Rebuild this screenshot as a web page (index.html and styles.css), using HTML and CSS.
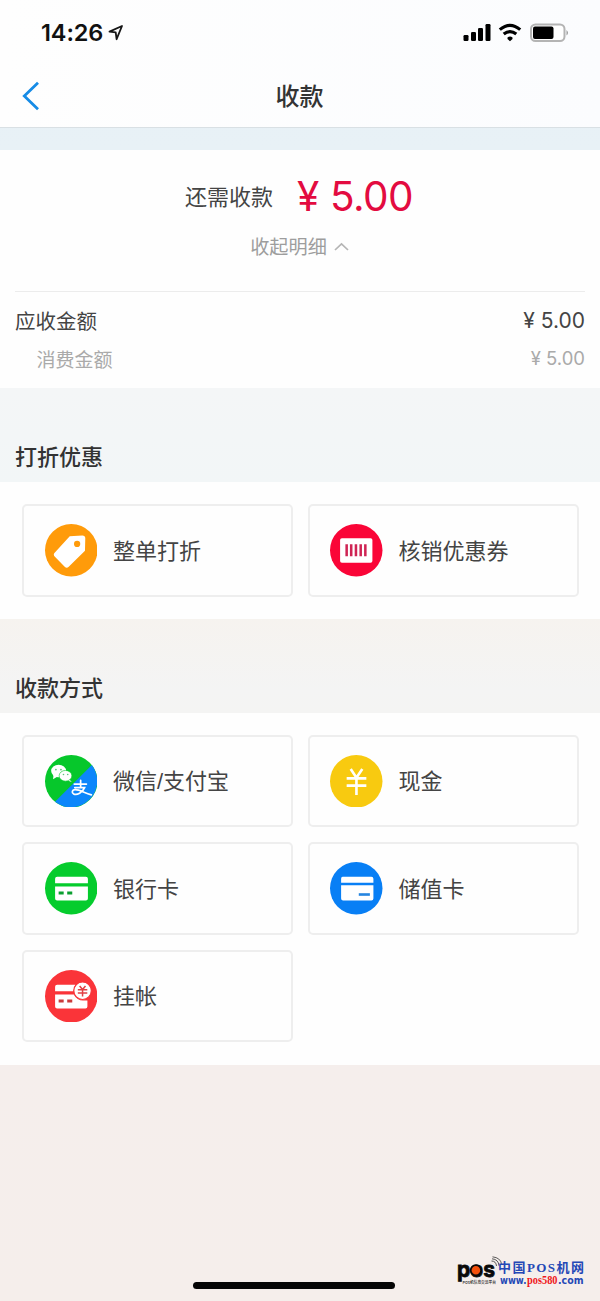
FILE: index.html
```html
<!DOCTYPE html>
<html lang="zh-CN">
<head>
<meta charset="utf-8">
<title>收款</title>
<link rel="stylesheet" href="styles.css">
</head>
<body>
<div class="screen">
  <header class="header">
    <div class="status">
      <div class="status-left">
        <span class="clock">14:26</span>
        <svg class="locate" width="16" height="18" viewBox="0 0 16 18"><path d="M1.5 7.6 14 2 8.6 15.2 7.7 8.3Z" fill="none" stroke="#151515" stroke-width="1.8" stroke-linejoin="round"/></svg>
      </div>
      <svg width="106" height="20" viewBox="0 0 106 20">
        <g fill="#000">
          <rect x="0.5" y="12" width="5" height="6" rx="1.2"/><rect x="8" y="9" width="5" height="9" rx="1.2"/><rect x="15" y="5" width="5" height="13" rx="1.2"/><rect x="22.5" y="1" width="5" height="17" rx="1.2"/>
          <path d="M44.5 14.4q2.5-1.6 5 0v1.5L47 18.3l-2.500-2.400z"/>
        </g>
        <path d="M36.800 6.600q10.200-8.600 20.400 0M40.700 11.100q6.300-5 12.600 0" fill="none" stroke="#000" stroke-width="3.200"/>
        <rect x="68" y="1.500" width="33.500" height="16.500" rx="4.500" fill="#fff" stroke="#b4b4b4" stroke-width="2"/>
        <rect x="70" y="3.500" width="20.500" height="12.500" rx="2" fill="#000"/>
        <path d="M103.500 7q3 2.800 0 5.600z" fill="#999"/>
      </svg>
    </div>
    <div class="navbar">
      <svg class="back" width="18" height="30" viewBox="0 0 18 30"><path d="M16 1.800 2.300 15 16 28.200" fill="none" stroke="#168be6" stroke-width="2.800"/></svg>
      <h1 class="title">收款</h1>
    </div>
  </header>

  <section class="summary">
    <div class="due"><span class="due-label">还需收款</span><span class="due-amount"><span class="yen">¥</span>5.00</span></div>
    <div class="toggle"><span>收起明细</span><svg width="15" height="9" viewBox="0 0 15 9"><path d="M1 8 7.500 1.800 14 8" fill="none" stroke="#b5b5b5" stroke-width="1.700"/></svg></div>
    <div class="details">
      <div class="row"><span>应收金额</span><span class="money">¥ 5.00</span></div>
      <div class="row sub"><span>消费金额</span><span class="money">¥ 5.00</span></div>
    </div>
  </section>

  <h2 class="section-title">打折优惠</h2>
  <section class="grid">
    <div class="option">
      <svg class="icon" viewBox="0 0 52 52"><circle cx="26" cy="26" r="26" fill="#ff9b0a"/><path d="M24.500 12.200 37 11.500q2.800 0 2.900 2.700L39.600 26.500 23.500 42.300q-2 1.900-4 0L9.800 32.400q-2.200-2.200 0-4.200Z" fill="#fff"/><circle cx="31.800" cy="19.800" r="3.100" fill="#ff9b0a"/></svg>
      <span class="label">整单打折</span>
    </div>
    <div class="option">
      <svg class="icon" viewBox="0 0 52 52"><circle cx="26" cy="26" r="26" fill="#fa0537"/><rect x="10" y="14" width="32" height="24.500" rx="1.800" fill="#fff"/><path d="M16.500 20v12M21 20v12M25.700 20v12M30.400 20v12M35 20v12" stroke="#cf2454" stroke-width="2.500"/></svg>
      <span class="label">核销优惠券</span>
    </div>
  </section>

  <h2 class="section-title">收款方式</h2>
  <section class="grid methods">
    <div class="option">
      <svg class="icon" viewBox="0 0 52 52"><circle cx="26" cy="26" r="26" fill="#06c72b"/><path d="M46.400 10A26 26 0 0 1 9.900 46.400Z" fill="#0c86fb"/><g fill="#fff"><ellipse cx="13.500" cy="15.800" rx="7.400" ry="6.200"/><path d="M8.500 19 8 24l4-2.500zM24 24l2.500 2.800-5.500-2z"/><ellipse cx="20.300" cy="20.600" rx="6.300" ry="5.300" stroke="#06c72b" stroke-width=".6"/></g><g fill="#5cc47c"><circle cx="10.800" cy="14.400" r=".9"/><circle cx="15.800" cy="14.400" r=".9"/><circle cx="18.300" cy="19.300" r=".8"/><circle cx="22.500" cy="19.300" r=".8"/></g><path d="M29 28.800h12M35.300 25v7M29.500 32.300h9.700c-2 4.800-7.500 8-10.800 6.300-2.300-1.200-1.600-4.300 1.600-4.300 4.600 0 8.800 3.300 15.900 5.200" fill="none" stroke="#fff" stroke-width="1.700" stroke-linecap="round"/></svg>
      <span class="label">微信/支付宝</span>
    </div>
    <div class="option">
      <svg class="icon" viewBox="0 0 52 52"><circle cx="26" cy="26" r="26" fill="#f8ca10"/><path d="M20.500 13.800 26.200 22.500 32 13.800M16.500 23.200h19.500M16.500 30.300h19.500M26.200 22v17.500" fill="none" stroke="#fff" stroke-width="2.600"/></svg>
      <span class="label">现金</span>
    </div>
    <div class="option">
      <svg class="icon" viewBox="0 0 52 52"><circle cx="26" cy="26" r="26" fill="#05cc2d"/><path d="M12 14.500h28.500q2 0 2 2V21h-32.500v-4.500q0-2 2-2zM10 24.200h32.500v12q0 2-2 2H12q-2 0-2-2z" fill="#fff"/><path d="M13.500 30.700h5M22 30.700h5" stroke="#0a9f30" stroke-width="3"/></svg>
      <span class="label">银行卡</span>
    </div>
    <div class="option">
      <svg class="icon" viewBox="0 0 52 52"><circle cx="26" cy="26" r="26" fill="#087ff5"/><path d="M12.500 14.500H41q2 0 2 2v4H11v-4q0-2 1.500-2zM11 23h32v13.200q0 2-2 2H13q-2 0-2-2z" fill="#fff"/><path d="M28.500 32.200h11" stroke="#2685e0" stroke-width="2.600"/></svg>
      <span class="label">储值卡</span>
    </div>
    <div class="option">
      <svg class="icon" viewBox="0 0 52 52"><circle cx="26" cy="26" r="26" fill="#fa3439"/><path d="M12 14.500h18L28 21H10v-4.500q0-2 2-2zM10 24.200h18.500q3.500 6.200 9.500 6H42v6q0 2-2 2H12q-2 0-2-2z" fill="#fff"/><path d="M13.500 30.700h5M22 30.700h5" stroke="#cc3b3b" stroke-width="2.800"/><circle cx="37.200" cy="20.500" r="8.700" fill="#fff" stroke="#fa3439" stroke-width="1.200"/><path d="M34.300 15.800l2.900 3.500 2.900-3.500M32.500 19.600h9.400M32.500 22.700h9.400M37.200 19.300v7" fill="none" stroke="#e14045" stroke-width="1.500"/></svg>
      <span class="label">挂帐</span>
    </div>
  </section>

  <footer class="footer">
    <div class="home-bar"></div>
    <svg class="watermark" width="132" height="38" viewBox="0 0 132 38">
      <text class="logo-text" x="2" y="20.500" textLength="38" lengthAdjust="spacingAndGlyphs">pos</text>
      <circle cx="20.900" cy="14.300" r="5.200" fill="#f4500b" stroke="#090909" stroke-width="1.800"/>
      <path d="M36.500 5q4.500 0 5 5M37 2.800q6.500.5 7 7M37.500 .8q8 1 9 7" fill="none" stroke="#333" stroke-width=".8"/>
      <text class="logo-tag" x="7.500" y="28" textLength="33.500" lengthAdjust="spacingAndGlyphs">POS机信息交流平台</text>
      <text class="logo-name" x="43" y="16" textLength="86">中国POS机网</text>
      <text class="logo-url" x="45" y="27.500" textLength="26.500" lengthAdjust="spacingAndGlyphs">www.</text>
      <text class="logo-url logo-red" x="72" y="27.500" textLength="30.500" lengthAdjust="spacingAndGlyphs">pos580</text>
      <text class="logo-url" x="103" y="27.500" textLength="25.500" lengthAdjust="spacingAndGlyphs">.com</text>
    </svg>
  </footer>
</div>
</body>
</html>
```
FILE: styles.css
```css
* { box-sizing: border-box; }
body { margin: 0; }
.screen {
  width: 600px;
  height: 1301px;
  display: flex;
  flex-direction: column;
  font-family: "Liberation Sans", "Noto Sans CJK SC", sans-serif;
  color: #444;
  background: linear-gradient(180deg, #e6f0f6 0, #e8f1f6 150px, #f4f6f7 390px, #f2f6f7 482px, #f6f3ef 618px, #f4f4f4 690px, #f4f4f3 712px, #f5eeec 1064px, #f5eeeb 1301px);
}
.header {
  height: 128px;
  background: linear-gradient(90deg, #fefefe, #fbfcfe);
  border-bottom: 1px solid #d9e0e4;
}
.status {
  height: 65px;
  padding: 0 31px 0 41px;
  display: flex;
  align-items: center;
  justify-content: space-between;
}
.status-left { display: flex; align-items: center; gap: 5px; padding-top: 1px; }
.clock { font: 600 23.500px/30px Inter, sans-serif; color: #111; letter-spacing: -.1px; }
.navbar { display: grid; grid-template-columns: 60px 1fr 60px; align-items: center; height: 62px; }
.back { margin-left: 22px; }
.title { margin: 0; padding: 2px 1px 0 0; text-align: center; font-size: 24px; font-weight: 500; color: #333; line-height: 36px; }

.summary { margin-top: 22px; height: 238px; background: #fefefe; padding: 20px 15px 0; }
.due { display: flex; height: 54px; align-items: center; justify-content: center; gap: 24px; }
.due-label { padding-top: 1px; font-size: 22px; line-height: 32px; }
.due-amount { font: 400 40.500px/54px Inter, "Liberation Sans", sans-serif; color: #e30b40; display: flex; letter-spacing: -.6px; margin-right: 2px; }
.yen { width: 33px; }
.toggle { display: flex; height: 28px; margin-top: 8px; padding-right: 1px; align-items: center; justify-content: center; gap: 7px; font-size: 19.200px; color: #9d9d9d; }
.details { margin-top: 31px; border-top: 1px solid #ececec; padding-top: 10px; }
.row { display: flex; height: 36px; align-items: center; justify-content: space-between; font-size: 20.500px; }
.money { font-family: Inter, sans-serif; font-size: 21px; }
.sub { height: 40px; padding-left: 21.500px; font-size: 19px; color: #aaa; }
.sub .money { font-size: 18.500px; }

.section-title { height: 94px; margin: 0; padding: 54px 15px 0; font-size: 22px; font-weight: 500; line-height: 32px; color: #333; }
.grid {
  display: grid;
  grid-template-columns: 271px 271px;
  grid-auto-rows: 92.500px;
  gap: 15px 14.500px;
  height: 136.500px;
  padding: 22px;
  background: #fefefe;
}
.methods { height: 352px; }
.option { display: flex; align-items: center; gap: 16px; padding-left: 20.500px; border: 2px solid #eee; border-radius: 5px; font-size: 22px; line-height: 32px; }
.label { padding-top: 3px; }
.icon { width: 52.500px; height: 52.500px; flex: none; }

.footer { flex: 1; position: relative; display: flex; align-items: flex-end; justify-content: center; }
.home-bar { width: 202px; height: 7px; margin: 0 0 12px -13px; border-radius: 4px; background: #050505; }
.watermark { position: absolute; right: 13px; bottom: 7px; }
.logo-text { font: 700 22px Inter, sans-serif; fill: #090909; stroke: #090909; stroke-width: .8px; }
.logo-tag { font: 500 4px "Noto Sans CJK SC", sans-serif; fill: #222; }
.logo-name { font: 700 13px "Liberation Serif", "Noto Sans CJK SC", serif; fill: #2448b6; }
.logo-url { font: 700 10px "DejaVu Sans", sans-serif; fill: #2448b6; }
.logo-red { font: 700 11.500px "Liberation Serif", serif; fill: #ef171c; }
```
